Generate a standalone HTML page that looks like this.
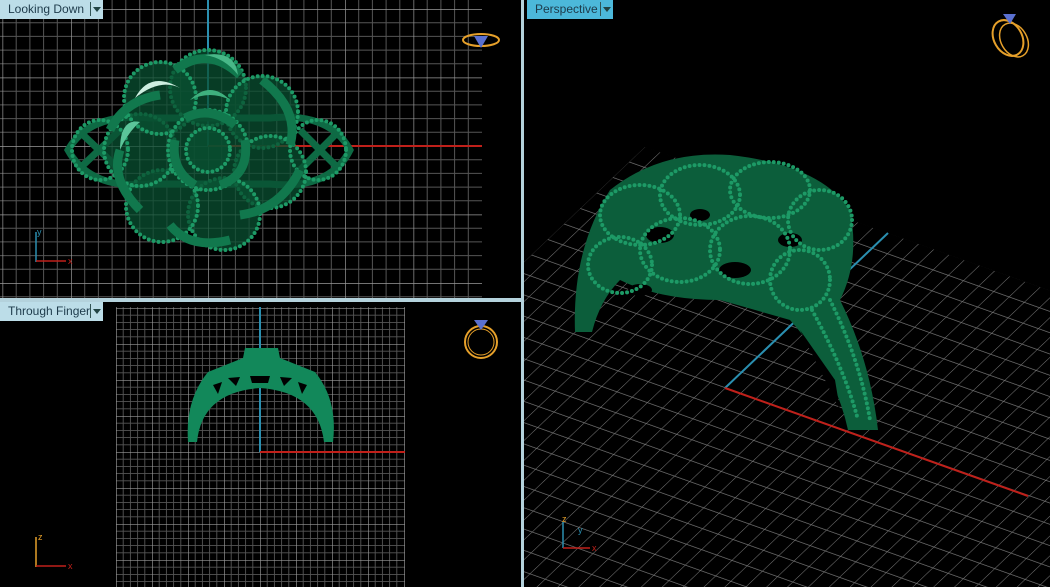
<!DOCTYPE html>
<html><head><meta charset="utf-8"><style>
html,body{margin:0;padding:0;background:#000;}
body{width:1050px;height:587px;overflow:hidden;position:relative;font-family:"Liberation Sans",sans-serif;}
svg{display:block;}
.lbl{position:absolute;height:19px;font-size:12px;line-height:19px;color:#1d3a4a;padding-left:8px;box-sizing:border-box;}
.arr{position:absolute;top:2px;width:11px;height:14px;border-left:1px solid #355;}
.arr:after{content:"";position:absolute;left:2px;top:5px;border-left:4px solid transparent;border-right:4px solid transparent;border-top:5px solid #244;}
</style></head><body>
<svg width="1050" height="587" style="position:absolute;left:0;top:0">
<defs>
<pattern id="g1" x="208" y="146" width="68.5" height="68.5" patternUnits="userSpaceOnUse">
<path d="M13.7 0V68.5M27.4 0V68.5M41.1 0V68.5M54.8 0V68.5M0 13.7H68.5M0 27.4H68.5M0 41.1H68.5M0 54.8H68.5" stroke="#555" stroke-width="1"/>
<path d="M0 0V68.5M0 0H68.5" stroke="#999" stroke-width="1.4"/>
</pattern>
<pattern id="g2" x="260" y="452" width="36" height="36" patternUnits="userSpaceOnUse">
<path d="M7.2 0V36M14.4 0V36M21.6 0V36M28.8 0V36M0 7.2H36M0 14.4H36M0 21.6H36M0 28.8H36" stroke="#555" stroke-width="0.9"/>
<path d="M0 0V36M0 0H36" stroke="#999" stroke-width="1.3"/>
</pattern>
<pattern id="g3" width="1" height="1" patternUnits="userSpaceOnUse" patternTransform="matrix(15.2,5.4,16.3,-15.5,725,388)">
<path d="M0 0V1M0 0H1" stroke="#7a7a7a" stroke-width="0.07"/>
</pattern>
<clipPath id="c3"><polygon points="645,147 1496,449 1496,900 319,900 319,457"/></clipPath>
<clipPath id="cr"><rect x="524" y="0" width="526" height="587"/></clipPath>
</defs>
<rect x="0" y="0" width="482" height="298" fill="url(#g1)"/>
<line x1="208" y1="0" x2="208" y2="146" stroke="#2a8fb0" stroke-width="2"/>
<line x1="208" y1="146" x2="482" y2="146" stroke="#c0201a" stroke-width="2"/>
<g fill="none" stroke="#0e6a44" stroke-width="7">
<path d="M68 150 Q90 112 150 118 L270 118 Q330 112 350 150 Q330 190 270 184 L150 184 Q90 190 68 150Z"/>
<path d="M78 130 L120 170 M78 170 L120 130 M300 130 L340 170 M300 170 L340 130"/>
</g>
<g fill="#0a5032" fill-opacity="0.75" stroke="#1d9a66" stroke-width="4" stroke-dasharray="0 5" stroke-linecap="round">
<circle cx="208" cy="88" r="38"/><circle cx="262" cy="112" r="36"/><circle cx="270" cy="172" r="36"/>
<circle cx="224" cy="214" r="36"/><circle cx="162" cy="206" r="36"/><circle cx="140" cy="150" r="36"/><circle cx="160" cy="98" r="36"/>
<circle cx="208" cy="150" r="40"/><circle cx="208" cy="150" r="22"/>
</g>
<g fill="none" stroke="#1d9a66" stroke-width="4" stroke-dasharray="0 5" stroke-linecap="round">
<ellipse cx="100" cy="150" rx="28" ry="30"/><ellipse cx="318" cy="150" rx="28" ry="30"/>
</g>
<g fill="none" stroke="#11784d" stroke-width="9">
<path d="M175 70 Q208 45 240 75"/><path d="M262 80 Q300 110 290 145"/><path d="M300 170 Q280 210 240 215"/>
<path d="M230 240 Q190 250 170 225"/><path d="M140 210 Q110 180 120 150"/><path d="M110 130 Q125 100 160 95"/>
<path d="M185 118 Q210 105 235 125"/><path d="M245 140 Q250 175 220 185"/><path d="M195 185 Q170 170 175 140"/>
</g>
<path d="M135 98 Q150 70 180 88 Q160 78 135 98Z" fill="#cdeee0"/>
<path d="M120 150 Q120 118 140 122 Q128 132 120 150Z" fill="#5cc59a"/>
<path d="M190 100 Q210 80 230 100 Q210 90 190 100Z" fill="#3fb07e"/>
<path d="M205 55 Q235 50 238 75 Q225 58 205 55Z" fill="#48b888"/>
<line x1="36" y1="262" x2="36" y2="232" stroke="#2a8fb0" stroke-width="1.5"/><line x1="36" y1="261" x2="66" y2="261" stroke="#c0201a" stroke-width="1.5"/>
<text x="37" y="235" fill="#2a8fb0" font-size="9">y</text><text x="68" y="264" fill="#c0201a" font-size="9">x</text>
<ellipse cx="481" cy="40" rx="18" ry="6" fill="none" stroke="#e6a02a" stroke-width="2"/>
<path d="M474 36 L488 36 L481 48Z" fill="#5a70d0"/>
<rect x="116" y="307" width="289" height="280" fill="url(#g2)"/>
<line x1="260" y1="307" x2="260" y2="452" stroke="#2a8fb0" stroke-width="2"/>
<line x1="260" y1="452" x2="405" y2="452" stroke="#c0201a" stroke-width="2"/>
<path d="M188 442 Q185 400 208 372 L243 358 L245 348 L278 348 L280 358 L315 372 Q338 400 333 442 L324 442 Q318 392 260 388 Q202 392 197 442Z" fill="#12885a"/>
<g fill="#000"><path d="M213 385 L222 382 L218 394Z"/><path d="M228 378 L240 377 L236 386Z"/><path d="M250 376 L270 376 L268 383 L252 383Z"/><path d="M280 377 L292 378 L284 386Z"/><path d="M298 382 L307 385 L302 394Z"/></g>
<line x1="36" y1="567" x2="36" y2="537" stroke="#e6a02a" stroke-width="1.5"/><line x1="36" y1="566" x2="66" y2="566" stroke="#c0201a" stroke-width="1.5"/>
<text x="38" y="540" fill="#e6a02a" font-size="9">z</text><text x="68" y="569" fill="#c0201a" font-size="9">x</text>
<circle cx="481" cy="342" r="16" fill="none" stroke="#e6a02a" stroke-width="2"/><circle cx="481" cy="342" r="13" fill="none" stroke="#e6a02a" stroke-width="1"/>
<path d="M474 320 L488 320 L481 330Z" fill="#5a70d0"/>
<rect x="521" y="0" width="3" height="587" fill="#b4d2dc"/>
<rect x="0" y="298" width="521" height="4" fill="#b4d2dc"/>
<g clip-path="url(#cr)">
<rect x="300" y="100" width="1300" height="900" fill="url(#g3)" clip-path="url(#c3)"/>
<line x1="725" y1="388" x2="888" y2="233" stroke="#2a8fb0" stroke-width="2"/>
<line x1="725" y1="388" x2="1028" y2="496" stroke="#c0201a" stroke-width="2"/>
<path d="M575 332 Q572 250 610 190 Q660 150 730 155 Q820 165 850 210 Q860 260 840 300 Q870 360 878 430 L848 430 Q835 370 790 320 L720 300 Q660 300 620 280 Q600 300 592 332Z" fill="#0c5e3b"/>
<g fill="#000"><ellipse cx="660" cy="235" rx="14" ry="8"/><ellipse cx="735" cy="270" rx="16" ry="8"/><ellipse cx="700" cy="215" rx="10" ry="6"/><ellipse cx="790" cy="240" rx="12" ry="7"/><ellipse cx="640" cy="290" rx="12" ry="6"/><path d="M800 330 L835 380 L840 410 Z"/></g>
<g fill="none" stroke="#1d9a66" stroke-width="4" stroke-dasharray="0 5" stroke-linecap="round">
<ellipse cx="640" cy="215" rx="40" ry="30"/><ellipse cx="700" cy="195" rx="40" ry="30"/><ellipse cx="770" cy="190" rx="40" ry="28"/>
<ellipse cx="820" cy="220" rx="32" ry="30"/><ellipse cx="680" cy="250" rx="40" ry="32"/><ellipse cx="750" cy="250" rx="40" ry="34"/>
<ellipse cx="800" cy="280" rx="30" ry="30"/><ellipse cx="620" cy="265" rx="32" ry="28"/>
<path d="M830 300 Q860 360 870 420"/><path d="M812 310 Q845 370 858 420"/>
</g>
<line x1="563" y1="548" x2="563" y2="522" stroke="#2a8fb0" stroke-width="1.5"/><line x1="563" y1="548" x2="590" y2="548" stroke="#c0201a" stroke-width="1.5"/>
<text x="562" y="522" fill="#e6a02a" font-size="9">z</text><text x="578" y="533" fill="#2a8fb0" font-size="9">y</text><text x="592" y="551" fill="#c0201a" font-size="9">x</text>
<ellipse cx="1008" cy="38" rx="14" ry="19" fill="none" stroke="#e6a02a" stroke-width="2" transform="rotate(-30 1008 38)"/>
<ellipse cx="1014" cy="40" rx="13" ry="18" fill="none" stroke="#e6a02a" stroke-width="1.5" transform="rotate(-30 1014 40)"/>
<path d="M1003 14 L1016 14 L1010 24Z" fill="#5a70d0"/>
</g>
</svg>
<div class="lbl" style="left:0;top:0;width:103px;background:#bcdde8;">Looking Down<span class="arr" style="left:90px"></span></div>
<div class="lbl" style="left:0;top:302px;width:103px;background:#bcdde8;">Through Finger<span class="arr" style="left:90px"></span></div>
<div class="lbl" style="left:527px;top:0;width:86px;background:#4cb8da;">Perspective<span class="arr" style="left:73px"></span></div>
</body></html>
